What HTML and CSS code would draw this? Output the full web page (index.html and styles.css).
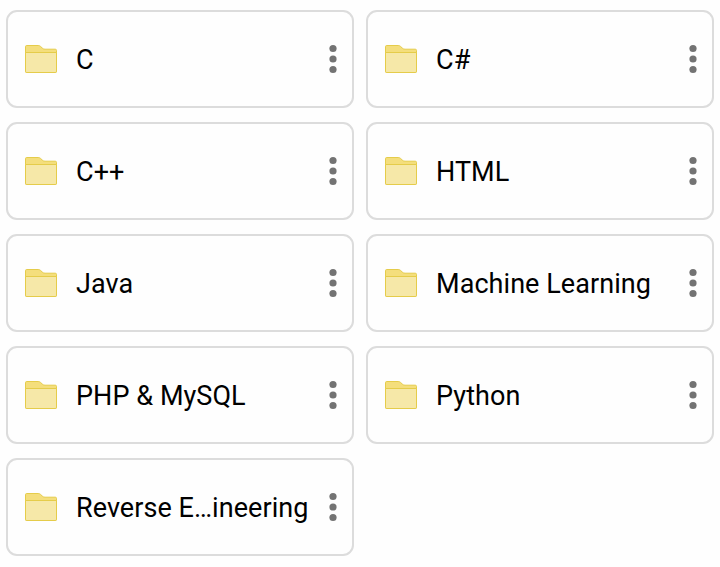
FILE: index.html
```html
<!DOCTYPE html>
<html lang="en">
<head>
    <meta charset="UTF-8"/>
    <title>Folders</title>
    <link rel="stylesheet" href="styles.css">
</head>
<body>
<!-- shared icons -->
<svg class="icon-defs" width="0" height="0">
    <symbol id="folder" viewBox="0 0 34 30">
        <path class="folder-back" d="M1.5 27.5V2.7Q1.5 1.5 2.7 1.5H14.2Q15.6 1.5 16.5 2.4L18.6 4.3Q19.5 5.2 21 5.2H31.3Q32.5 5.2 32.5 6.4V27.3Q32.5 28.5 31.3 28.5H2.7Q1.5 28.5 1.5 27.5Z"/>
        <path class="folder-front" d="M1.5 8.5H32.5V27.3Q32.5 28.5 31.3 28.5H2.7Q1.5 28.5 1.5 27.3Z"/>
    </symbol>
    <symbol id="more" viewBox="0 0 8 30">
        <circle cx="4" cy="4.5" r="3.6"/>
        <circle cx="4" cy="15" r="3.6"/>
        <circle cx="4" cy="25.5" r="3.6"/>
    </symbol>
</svg>

<div class="folders">
    <div class="folder">
        <svg class="folder_icon"><use href="#folder"/></svg>
        <span class="folder_name">C</span>
        <svg class="folder_more"><use href="#more"/></svg>
    </div>
    <div class="folder">
        <svg class="folder_icon"><use href="#folder"/></svg>
        <span class="folder_name">C#</span>
        <svg class="folder_more"><use href="#more"/></svg>
    </div>
    <div class="folder">
        <svg class="folder_icon"><use href="#folder"/></svg>
        <span class="folder_name">C++</span>
        <svg class="folder_more"><use href="#more"/></svg>
    </div>
    <div class="folder">
        <svg class="folder_icon"><use href="#folder"/></svg>
        <span class="folder_name">HTML</span>
        <svg class="folder_more"><use href="#more"/></svg>
    </div>
    <div class="folder">
        <svg class="folder_icon"><use href="#folder"/></svg>
        <span class="folder_name">Java</span>
        <svg class="folder_more"><use href="#more"/></svg>
    </div>
    <div class="folder">
        <svg class="folder_icon"><use href="#folder"/></svg>
        <span class="folder_name">Machine Learning</span>
        <svg class="folder_more"><use href="#more"/></svg>
    </div>
    <div class="folder">
        <svg class="folder_icon"><use href="#folder"/></svg>
        <span class="folder_name">PHP &amp; MySQL</span>
        <svg class="folder_more"><use href="#more"/></svg>
    </div>
    <div class="folder">
        <svg class="folder_icon"><use href="#folder"/></svg>
        <span class="folder_name">Python</span>
        <svg class="folder_more"><use href="#more"/></svg>
    </div>
    <div class="folder">
        <svg class="folder_icon"><use href="#folder"/></svg>
        <span class="folder_name">Reverse E…ineering</span>
        <svg class="folder_more"><use href="#more"/></svg>
    </div>
</div>
</body>
</html>
```
FILE: styles.css
```css
body {
    margin: 0;
    background: #fefefe;
    font-family: Roboto, sans-serif;
}

.icon-defs {
    display: block;
}

.folders {
    display: grid;
    grid-template-columns: 348px 348px;
    gap: 14px 12px;
    padding: 10px 6px;
}

.folder {
    display: flex;
    align-items: center;
    box-sizing: border-box;
    height: 98px;
    padding: 0 15px 0 16px;
    border: 2px solid #dcdcdc;
    border-radius: 11px;
}

.folder_icon {
    width: 34px;
    height: 30px;
    margin-right: 18px;
}

.folder-back {
    fill: #f4de7c;
    stroke: #e5cc4a;
}

.folder-front {
    fill: #f6e8a8;
    stroke: #e5cc4a;
}

.folder_name {
    flex: 1;
    padding-top: 2px;
    color: #000;
    font-size: 27px;
    line-height: 32px;
    letter-spacing: 0.06px;
    white-space: nowrap;
}

.folder_more {
    width: 8px;
    height: 30px;
    fill: #737373;
}
```
